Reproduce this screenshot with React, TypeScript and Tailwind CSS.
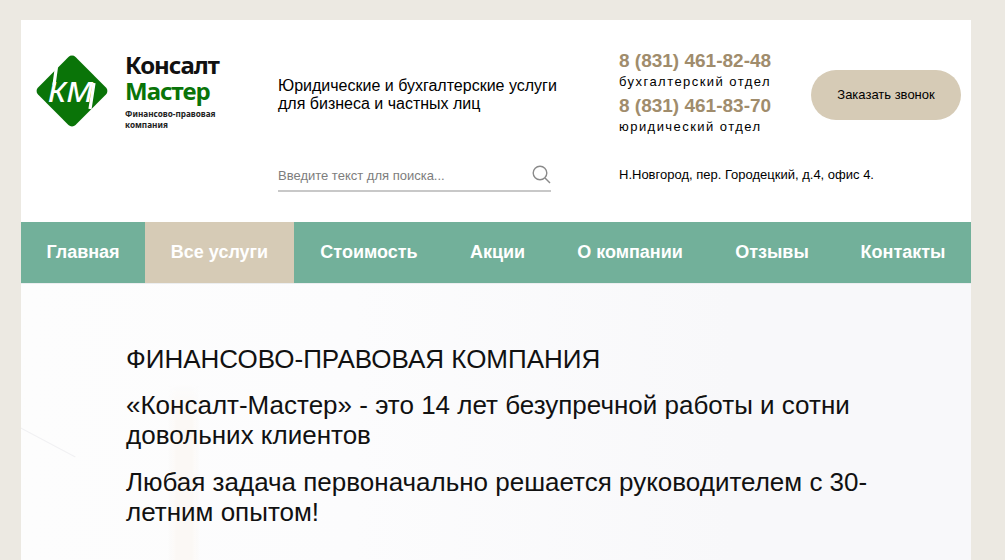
const navItems = [
  { label: 'Главная', width: 'w-[124px]' },
  { label: 'Все услуги', width: 'w-[149px]', active: true },
  { label: 'Стоимость', width: 'w-[150px]' },
  { label: 'Акции', width: 'w-[107px]' },
  { label: 'О компании', width: 'w-[158px]' },
  { label: 'Отзывы', width: 'w-[126px]' },
  { label: 'Контакты', width: 'w-[136px]' },
];

function Logo() {
  return (
    <div className="flex w-[257px] pl-[13px] pt-[33px]">
      <svg width="76" height="76" viewBox="0 0 76 76" className="shrink-0">
        <rect x="11.5" y="11.5" width="53" height="53" rx="5" transform="rotate(45 38 38)" fill="#0a7408" />
        <text
          x="37"
          y="49"
          textAnchor="middle"
          fontFamily="'Noto Sans', sans-serif"
          fontSize="37"
          fontStyle="italic"
          fontWeight="400"
          fill="#ffffff"
        >
          км
        </text>
        {/* stems of the mark that run past the letters */}
        <path d="M23 10L20 32M60 30L56 56" stroke="#ffffff" strokeWidth="3.2" fill="none" />
      </svg>
      <div className="ml-[15px] font-['Noto_Sans',sans-serif] font-bold">
        <div className="text-[24px] leading-[26px] mt-[-1px] tracking-[-1px] text-[#111]">Консалт</div>
        <div className="text-[24px] leading-[26px] tracking-[-1px] text-[#0a7408]">Мастер</div>
        <div className="text-[8.2px] leading-[11px] mt-[4px] font-bold text-[#222] whitespace-nowrap">
          Финансово-правовая
          <br />
          компания
        </div>
      </div>
    </div>
  );
}

function Tagline() {
  return (
    <div className="w-[341px] pt-[57px]">
      <div className="text-[16px] leading-[18px] text-black h-[84px]">
        Юридические и бухгалтерские услуги
        <br />
        для бизнеса и частных лиц
      </div>
      <div className="flex items-center justify-between w-[273px] h-[31px] border-b-2 border-[#c8c8c8]">
        <span className="text-[13px] text-[#7d7d7d]">Введите текст для поиска...</span>
        <svg width="19" height="19" viewBox="0 0 19 19" fill="none" stroke="#8a8a8a" strokeWidth="1.4" className="mb-[2px]">
          <circle cx="8" cy="8" r="6.8" />
          <path d="M13 13l5 5" />
        </svg>
      </div>
    </div>
  );
}

function Contacts() {
  return (
    <div className="w-[192px] pt-[30px]">
      <div className="text-[19px] leading-[22px] font-bold text-[#a08c6c]">8 (831) 461-82-48</div>
      <div className="text-[13px] leading-[18px] mt-[1px] tracking-[1.45px] text-black">бухгалтерский отдел</div>
      <div className="text-[19px] leading-[22px] mt-[4px] font-bold text-[#a08c6c]">8 (831) 461-83-70</div>
      <div className="text-[13px] leading-[18px] mt-[1px] tracking-[1.45px] text-black">юридический отдел</div>
      <div className="text-[13px] leading-[16px] mt-[31px] text-black whitespace-nowrap">
        Н.Новгород, пер. Городецкий, д.4, офис 4.
      </div>
    </div>
  );
}

export default function App() {
  return (
    <div className="h-[560px] overflow-hidden bg-[#ece9e2] pt-[20px] font-['Liberation_Sans',Arial,sans-serif]">
      <div className="w-[950px] ml-[21px]">
        <header className="flex h-[202px] bg-white">
          <Logo />
          <Tagline />
          <Contacts />
          <div className="pt-[50px]">
            <button className="w-[150px] h-[50px] rounded-[25px] bg-[#d6cbb6] text-[13px] text-black">
              Заказать звонок
            </button>
          </div>
        </header>

        <nav className="flex h-[61px] bg-[#72b09a]">
          {navItems.map((item) => (
            <a
              key={item.label}
              className={`flex items-center justify-center text-[18px] font-bold text-white ${item.width} ${
                item.active ? 'bg-[#d6cbb6]' : ''
              }`}
            >
              {item.label}
            </a>
          ))}
        </nav>

        <section className="relative h-[277px] overflow-hidden border-t border-[#eceef0] pl-[105px] pr-[100px] pt-[60px] text-[26px] leading-[30px] text-[#111] bg-[linear-gradient(90deg,#fdfdfd_0%,#fcfcfd_35%,#f8f8fa_75%,#f8f8fa_100%)]">
          {/* faint photo behind the text */}
          <div className="absolute left-[147px] top-[100px] bottom-0 w-[32px] bg-[linear-gradient(90deg,#fbf8f500,#fbf8f5_25%,#fbf8f5_75%,#fbf8f500)] [mask-image:linear-gradient(180deg,transparent,black_15%)]" />
          <div className="absolute left-[-4px] top-[158px] w-[62px] h-px rotate-[28deg] bg-[#f1f1f3]" />
          <div className="relative">
            <p className="mb-[16px]">ФИНАНСОВО-ПРАВОВАЯ КОМПАНИЯ</p>
            <p className="mb-[17px]">«Консалт-Мастер» - это 14 лет безупречной работы и сотни довольних клиентов</p>
            <p>Любая задача первоначально решается руководителем с 30-летним опытом!</p>
          </div>
        </section>
      </div>
    </div>
  );
}
